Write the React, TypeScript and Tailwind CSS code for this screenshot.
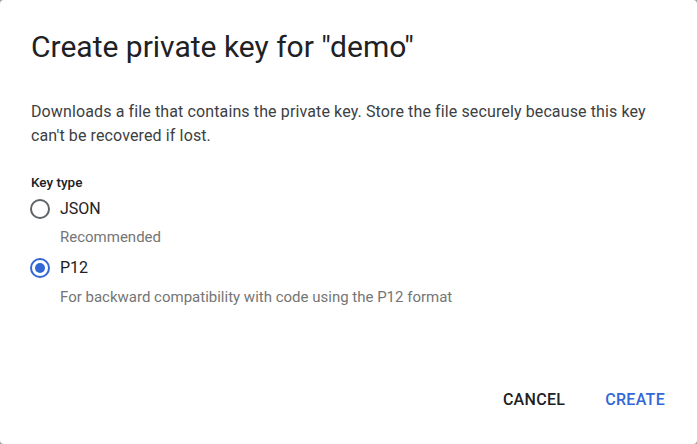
export default function App() {
  return (
    <div className="w-[697px] h-[444px] bg-[#9e9e9e] font-['Roboto',sans-serif]">
      <div className="w-full h-full bg-white rounded-[4px] flex flex-col">
        <h2 className="pl-[31px] pt-[27px] text-[30px] leading-[40px] text-[#202124]">
          Create private key for "demo"
        </h2>

        <p className="pl-[31px] pr-[40px] mt-[33px] text-[16px] leading-[24px] tracking-[0.12px] text-[#3c4043]">
          Downloads a file that contains the private key. Store the file securely because this key can't be recovered if lost.
        </p>

        <div className="pl-[31px] mt-[24px]">
          <div className="text-[13.5px] leading-[20px] font-medium text-[#202124]">Key type</div>

          {/* JSON option */}
          <div className="flex items-center gap-[10px] -ml-[1px] mt-[5px] h-[24px]">
            <span className="w-[20px] h-[20px] rounded-full border-2 border-[#5f6368]" />
            <span className="text-[16px] text-[#202124]">JSON</span>
          </div>
          <div className="pl-[29px] mt-[6px] text-[15px] leading-[20px] text-[#757575]">Recommended</div>

          {/* P12 option */}
          <div className="flex items-center gap-[10px] -ml-[1px] mt-[9px] h-[24px]">
            <span className="w-[20px] h-[20px] rounded-full border-2 border-[#3367d6] flex items-center justify-center">
              <span className="w-[10px] h-[10px] rounded-full bg-[#3367d6]" />
            </span>
            <span className="text-[16px] text-[#202124]">P12</span>
          </div>
          <div className="pl-[29px] mt-[7px] text-[15px] leading-[20px] text-[#757575]">
            For backward compatibility with code using the P12 format
          </div>
        </div>

        <div className="mt-auto mb-[26px] flex justify-end gap-[8px] pr-[16px]">
          <button className="px-[16px] h-[36px] text-[16px] font-medium tracking-[0.3px] text-[#202124]">CANCEL</button>
          <button className="px-[16px] h-[36px] text-[16px] font-medium tracking-[0.3px] text-[#3367d6]">CREATE</button>
        </div>
      </div>
    </div>
  );
}
